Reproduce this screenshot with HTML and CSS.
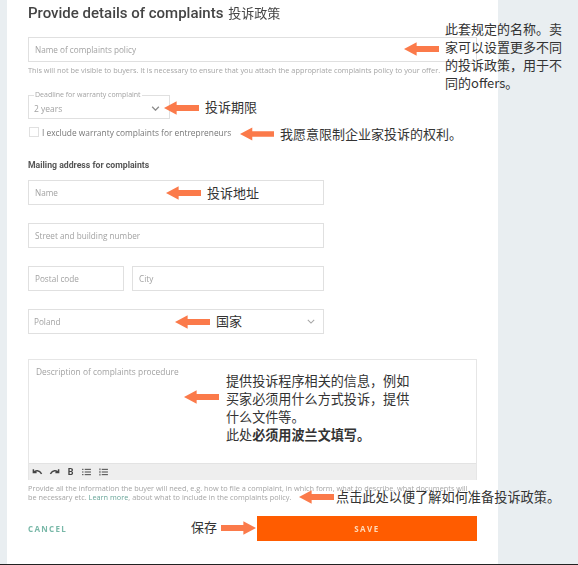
FILE: index.html
```html
<!DOCTYPE html>
<html lang="en">
<head>
<meta charset="utf-8">
<title>Provide details of complaints</title>
<link rel="stylesheet" href="styles.css">
</head>
<body>
<main class="panel">
  <h1 class="title">Provide details of complaints <span class="zh-title">投诉政策</span></h1>
  <div class="field field-full">Name of complaints policy</div>
  <p class="hint hint-one">This will not be visible to buyers. It is necessary to ensure that you attach the appropriate complaints policy to your offer.</p>
  <div class="field field-deadline">
    <span class="legend">Deadline for warranty complaint</span>
    <span>2 years</span>
    <svg class="chev chev-dark" viewBox="0 0 10 6"><path d="M1 1l4 4 4-4"/></svg>
  </div>
  <label class="check"><span class="box"></span>I exclude warranty complaints for entrepreneurs</label>
  <h2 class="subhead">Mailing address for complaints</h2>
  <div class="address">
    <div class="field">Name</div>
    <div class="field">Street and building number</div>
    <div class="row">
      <div class="field postal">Postal code</div>
      <div class="field city">City</div>
    </div>
    <div class="field select">
      <span>Poland</span>
      <svg class="chev" viewBox="0 0 10 6"><path d="M1 1l4 4 4-4"/></svg>
    </div>
  </div>
  <div class="editor">
    <div class="editor-body">Description of complaints procedure</div>
    <div class="toolbar">
      <svg viewBox="0 0 12 8"><path class="ic" d="M1.5 1v3.5H5M1.8 4.3C4 2 7.8 1.8 10.5 6"/></svg>
      <svg viewBox="0 0 12 8"><path class="ic" d="M10.5 1v3.5H7M10.2 4.3C8 2 4.2 1.8 1.5 6"/></svg>
      <b class="bold">B</b>
      <svg viewBox="0 0 10 9"><path class="ic thin" d="M3 1.5h7M3 4.5h7M3 7.5h7M0 1.5h1.6M0 4.5h1.6M0 7.5h1.6"/></svg>
      <svg viewBox="0 0 10 9"><path class="ic thin" d="M3 1.5h7M3 4.5h7M3 7.5h7M1 .5v2M1 3.5v2M1 6.5v2"/></svg>
    </div>
  </div>
  <p class="hint hint-two">Provide all the information the buyer will need, e.g. how to file a complaint, in which form, what to describe, what documents will be necessary etc. <a class="link">Learn more</a>, about what to include in the complaints policy.</p>
  <div class="actions">
    <a class="cancel">CANCEL</a>
    <button class="save">SAVE</button>
  </div>
</main>

<svg class="arrow a1" viewBox="0 0 36 14"><path d="M0 7L13 0v4h23v6H13v4z"/></svg>
<svg class="arrow a2" viewBox="0 0 36 14"><path d="M0 7L13 0v4h23v6H13v4z"/></svg>
<svg class="arrow a3" viewBox="0 0 36 14"><path d="M0 7L13 0v4h23v6H13v4z"/></svg>
<svg class="arrow a4" viewBox="0 0 36 14"><path d="M0 7L13 0v4h23v6H13v4z"/></svg>
<svg class="arrow a5" viewBox="0 0 36 14"><path d="M0 7L13 0v4h23v6H13v4z"/></svg>
<svg class="arrow a6" viewBox="0 0 36 14"><path d="M0 7L13 0v4h23v6H13v4z"/></svg>
<svg class="arrow a7" viewBox="0 0 36 14"><path d="M0 7L13 0v4h23v6H13v4z"/></svg>
<svg class="arrow a8" viewBox="0 0 36 14"><path d="M36 7L23 0v4H0v6h23v4z"/></svg>

<div class="note n1">此套规定的名称。卖<br>家可以设置更多不同<br>的投诉政策，用于不<br>同的offers。</div>
<div class="note n2">投诉期限</div>
<div class="note n3">我愿意限制企业家投诉的权利。</div>
<div class="note n4">投诉地址</div>
<div class="note n5">国家</div>
<div class="note n6">提供投诉程序相关的信息，例如<br>买家必须用什么方式投诉，提供<br>什么文件等。<br>此处<b>必须用波兰文填写。</b></div>
<div class="note n7">点击此处以便了解如何准备投诉政策。</div>
<div class="note n8">保存</div>
</body>
</html>
```
FILE: styles.css
```css
* { box-sizing: border-box; }
html, body { margin: 0; height: 565px; overflow: hidden; }
body {
  position: relative;
  background: #e9eef1;
  border-bottom: 1px solid #222;
  font-family: "Open Sans", "Noto Sans CJK SC", sans-serif;
  color: #9a9a9a;
}
.panel {
  margin-left: 7px;
  width: 491px;
  height: 564px;
  background: #fff;
  padding: 0 21px;
  display: flex;
  flex-direction: column;
  filter: blur(.35px);
}
.title {
  margin: 3px 0 0;
  height: 20px;
  font: 500 15px/20px Roboto, "Noto Sans CJK SC", sans-serif;
  letter-spacing: 0;
  color: #444;
  white-space: nowrap;
}
.zh-title { font-size: 13px; font-weight: 400; margin-left: 1px; }
.field {
  height: 25px;
  border: 1px solid #e0e0e0;
  padding-left: 6px;
  display: flex;
  align-items: center;
  font-size: 8.2px;
  color: #a2a2a2;
  position: relative;
}
.field-full { margin-top: 14px; }
.hint { margin: 0; font-size: 7.35px; line-height: 9px; color: #a5a5a5; }
.hint-one { margin-top: 4px; white-space: nowrap; }
.field-deadline {
  margin-top: 20px;
  width: 142px;
  height: 24px;
  justify-content: space-between;
  padding: 2px 9px 0 5px;
  font-size: 8.5px;
}
.legend {
  position: absolute;
  left: 5px;
  top: -6px;
  background: #fff;
  padding: 0 1px;
  font-size: 7px;
  line-height: 10px;
  white-space: nowrap;
}
.chev { width: 8px; height: 5px; fill: none; stroke: #a5a5a5; stroke-width: 1.3; }
.chev-dark { width: 9px; stroke: #8d8d8d; stroke-width: 1.6; }
.check {
  margin-top: 8px;
  height: 10px;
  display: flex;
  align-items: center;
  font-size: 8.4px;
  color: #777;
  white-space: nowrap;
}
.box { width: 10px; height: 10px; border: 1px solid #e0e0e0; margin: 0 3px 0 1px; }
.subhead {
  margin: 22px 0 0;
  font: 700 8.7px/12px Roboto, sans-serif;
  color: #555;
}
.address {
  margin-top: 9px;
  width: 296px;
  display: flex;
  flex-direction: column;
  gap: 18px;
}
.row { display: flex; gap: 8px; }
.postal { width: 96px; }
.city { flex: 1; }
.select { justify-content: space-between; padding: 0 8px 0 5px; }
.editor { margin-top: 25px; border: 1px solid #e6e6e6; border-bottom: 0; }
.editor-body {
  height: 103px;
  padding: 7px 7px;
  font-size: 8.4px;
  line-height: 10px;
  color: #a2a2a2;
}
.toolbar {
  height: 17px;
  background: #eeeeee;
  border-top: 1px solid #e3e3e3;
  display: flex;
  align-items: center;
  padding-left: 3px;
  gap: 6px;
}
.toolbar svg { width: 11px; height: 8px; }
.ic { fill: none; stroke: #444; stroke-width: 1.6; }
.thin { stroke-width: 1.1; }
.bold { width: 9px; text-align: center; font: 700 9px/10px Roboto, sans-serif; color: #444; }
.hint-two { margin-top: 4px; }
.link { color: #6aa69a; }
.actions {
  margin-top: 14px;
  display: flex;
  align-items: center;
  justify-content: space-between;
}
.cancel { font: 700 8px/10px "Open Sans", sans-serif; letter-spacing: 1.3px; color: #79b8a8; }
.save {
  width: 220px;
  height: 25px;
  border: 0;
  padding: 0;
  background: #ff5c00;
  color: #ffd9b8;
  font: 700 8px/10px "Open Sans", sans-serif;
  letter-spacing: 1.5px;
}
.arrow { position: absolute; width: 35px; height: 14px; fill: #fb7a4a; }
.a1 { left: 404px; top: 42px; }
.a2 { left: 164px; top: 101px; }
.a3 { left: 240px; top: 127px; width: 34px; }
.a4 { left: 166px; top: 186px; }
.a5 { left: 175px; top: 315px; }
.a6 { left: 184px; top: 390px; }
.a7 { left: 299px; top: 490px; }
.a8 { left: 221px; top: 521px; }
.note {
  position: absolute;
  font-family: "Noto Sans CJK SC", sans-serif;
  font-size: 13px;
  line-height: 18px;
  color: #333;
  white-space: nowrap;
}
.n1 { left: 445px; top: 20px; font-size: 13px; }
.n2 { left: 205px; top: 98px; }
.n3 { left: 280px; top: 125px; }
.n4 { left: 207px; top: 184px; }
.n5 { left: 216px; top: 312px; }
.n6 { left: 226px; top: 372px; font-size: 13.1px; }
.n7 { left: 336px; top: 491px; font-size: 13.2px; line-height: 12px; }
.n8 { left: 191px; top: 518px; }
```
